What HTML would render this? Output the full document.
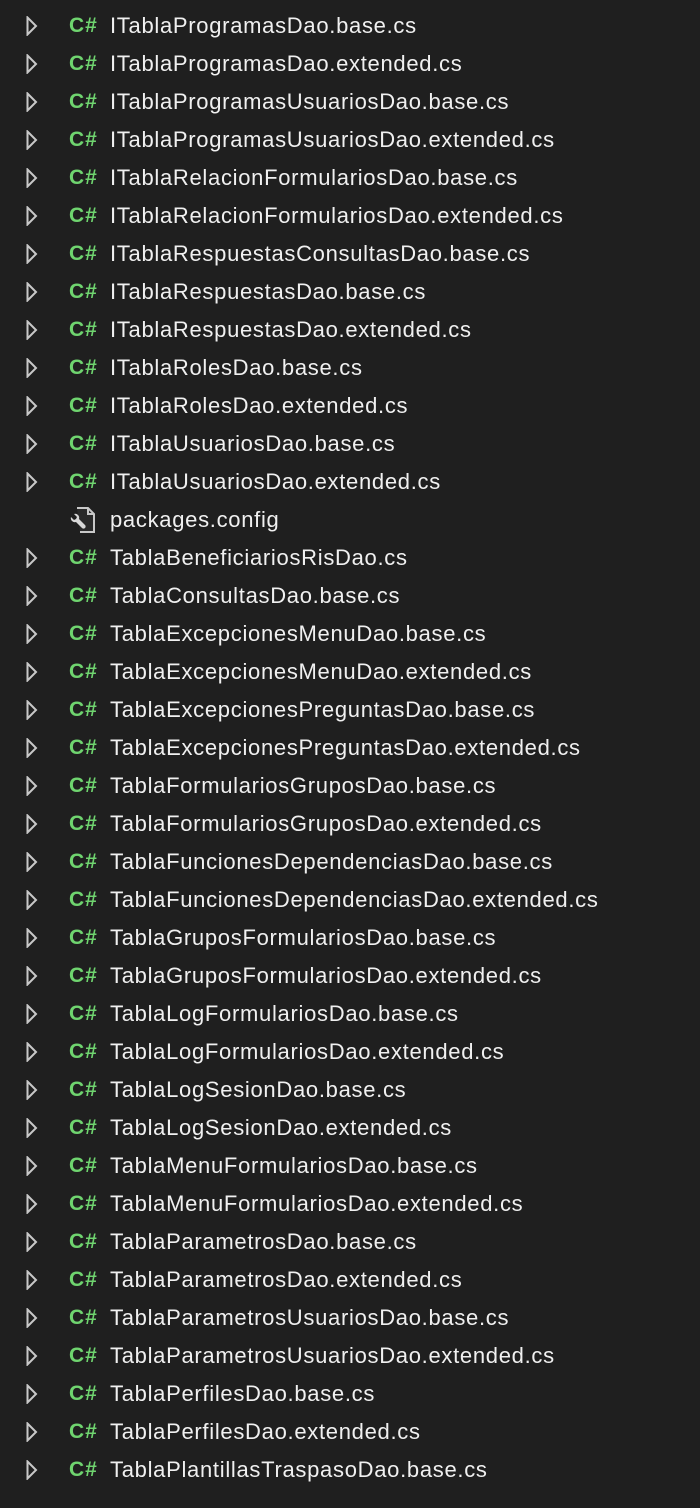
<!DOCTYPE html>
<html><head><meta charset="utf-8"><style>
html,body{margin:0;padding:0;background:#1f1f1f;width:700px;height:1492px;overflow:hidden}
.r{position:absolute;left:0;height:38px;width:700px}
.a{position:absolute;left:26px;top:-10px}
.c{position:absolute;left:69px;top:-12px;font:bold 21px "Liberation Sans",sans-serif;color:#6fd46f;letter-spacing:1px}
.t{position:absolute;left:110px;top:-13px;font:22px "Liberation Sans",sans-serif;color:#f0f0f0;white-space:nowrap;letter-spacing:0.7px}
</style></head><body>
<div id="L"></div>
<script>
var n=["ITablaProgramasDao.base.cs","ITablaProgramasDao.extended.cs","ITablaProgramasUsuariosDao.base.cs","ITablaProgramasUsuariosDao.extended.cs","ITablaRelacionFormulariosDao.base.cs","ITablaRelacionFormulariosDao.extended.cs","ITablaRespuestasConsultasDao.base.cs","ITablaRespuestasDao.base.cs","ITablaRespuestasDao.extended.cs","ITablaRolesDao.base.cs","ITablaRolesDao.extended.cs","ITablaUsuariosDao.base.cs","ITablaUsuariosDao.extended.cs","packages.config","TablaBeneficiariosRisDao.cs","TablaConsultasDao.base.cs","TablaExcepcionesMenuDao.base.cs","TablaExcepcionesMenuDao.extended.cs","TablaExcepcionesPreguntasDao.base.cs","TablaExcepcionesPreguntasDao.extended.cs","TablaFormulariosGruposDao.base.cs","TablaFormulariosGruposDao.extended.cs","TablaFuncionesDependenciasDao.base.cs","TablaFuncionesDependenciasDao.extended.cs","TablaGruposFormulariosDao.base.cs","TablaGruposFormulariosDao.extended.cs","TablaLogFormulariosDao.base.cs","TablaLogFormulariosDao.extended.cs","TablaLogSesionDao.base.cs","TablaLogSesionDao.extended.cs","TablaMenuFormulariosDao.base.cs","TablaMenuFormulariosDao.extended.cs","TablaParametrosDao.base.cs","TablaParametrosDao.extended.cs","TablaParametrosUsuariosDao.base.cs","TablaParametrosUsuariosDao.extended.cs","TablaPerfilesDao.base.cs","TablaPerfilesDao.extended.cs","TablaPlantillasTraspasoDao.base.cs"];
var h="";
n.forEach(function(s,i){
var y=26+38*i;
h+='<div class="r" style="top:'+y+'px">';
if(s=="packages.config"){
h+='<svg style="position:absolute;left:68px;top:-13px" width="30" height="28" viewBox="0 0 30 28"><path d="M9 1h11l6 6v18h-14" fill="#2a2a2a" stroke="#c8c8c8" stroke-width="2"/><path d="M20 1v6h6" fill="none" stroke="#c8c8c8" stroke-width="2"/><path d="M3 10a4 4 0 0 0 5 5l6 6a2 2 0 0 0 3-3l-6-6a4 4 0 0 0-5-5l3 3-1 2-2 1z" fill="#d8d8d8"/></svg>';
}else{
h+='<svg class="a" width="12" height="20" viewBox="0 0 12 20"><path d="M1.5 1.5L10 10 1.5 18.5z" fill="none" stroke="#c8c8c8" stroke-width="2"/></svg>';
h+='<span class="c">C#</span>';
}
h+='<span class="t">'+s+'</span></div>';
});
document.getElementById("L").innerHTML=h;
</script>
</body></html>
